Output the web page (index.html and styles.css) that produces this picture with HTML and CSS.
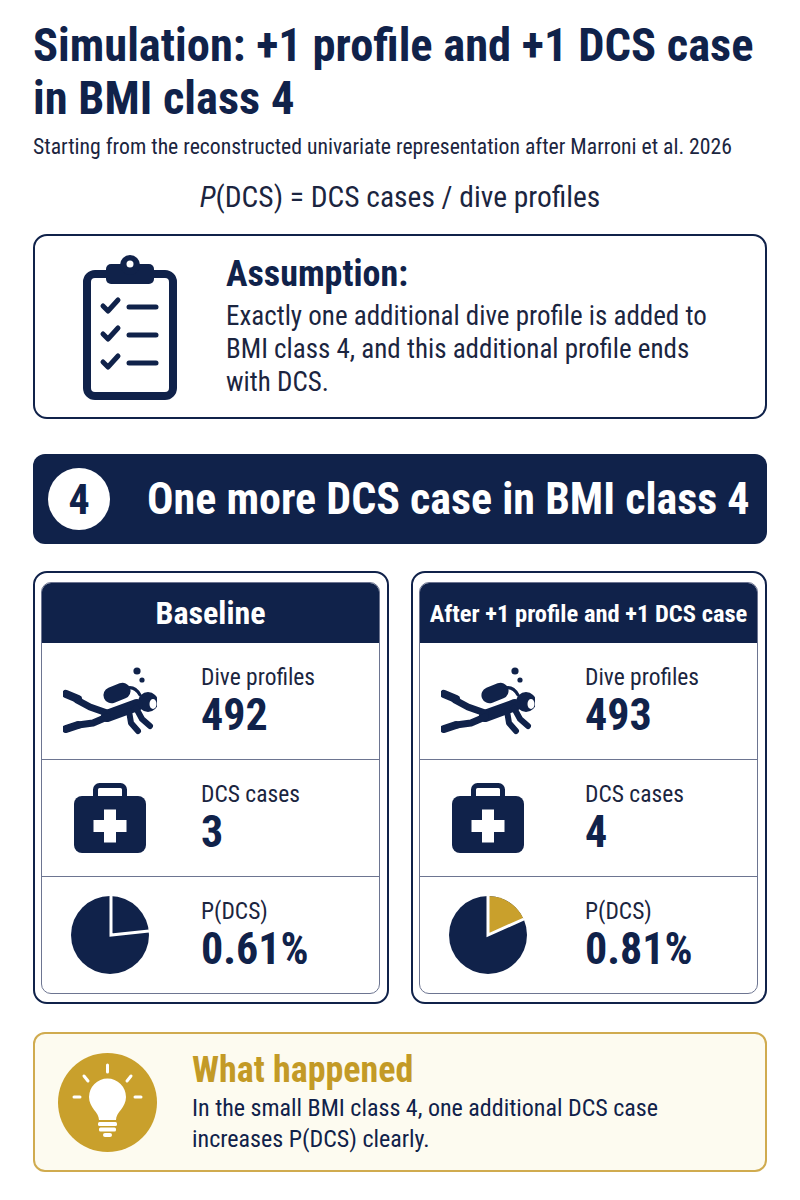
FILE: index.html
```html
<!DOCTYPE html>
<html lang="en">
<head>
<meta charset="utf-8">
<title>Simulation: +1 profile and +1 DCS case in BMI class 4</title>
<link rel="stylesheet" href="styles.css">
</head>
<body>
<div class="page">
  <h1 class="title">Simulation: +1 profile and +1 DCS case in BMI class 4</h1>
  <p class="subtitle">Starting from the reconstructed univariate representation after Marroni et al. 2026</p>
  <p class="formula"><i>P</i>(DCS) = DCS cases / dive profiles</p>

  <section class="assume">
    <svg class="clip-icon" width="94" height="146" viewBox="0 0 94 146">
      <rect x="4" y="20" width="86" height="122" rx="8" fill="#fff" stroke="#10224a" stroke-width="8"/>
      <rect x="23" y="10" width="48" height="20" rx="5" fill="#10224a"/>
      <circle cx="47" cy="11" r="10" fill="#10224a"/>
      <circle cx="47" cy="10" r="3.5" fill="#fff"/>
      <g fill="none" stroke="#10224a" stroke-width="5" stroke-linecap="round" stroke-linejoin="round">
        <path d="M20 52 l5 5 l10 -11"/>
        <path d="M46 53 H73"/>
        <path d="M20 80 l5 5 l10 -11"/>
        <path d="M46 81 H73"/>
        <path d="M20 108 l5 5 l10 -11"/>
        <path d="M46 109 H73"/>
      </g>
    </svg>
    <div class="assume-text">
      <h2>Assumption:</h2>
      <p>Exactly one additional dive profile is added to BMI class 4, and this additional profile ends with DCS.</p>
    </div>
  </section>

  <section class="banner">
    <span class="badge">4</span>
    <span class="banner-text">One more DCS case in BMI class 4</span>
  </section>

  <div class="cards">
    <div class="card">
      <div class="panel">
        <div class="panel-head">Baseline</div>
        <div class="row">
          <div class="icon-cell">
            <svg width="94" height="69" viewBox="0 0 94 69">
              <g fill="#10224a">
                <circle cx="74" cy="4" r="3.6"/>
                <circle cx="79" cy="13" r="2.6"/>
                <circle cx="85" cy="35" r="10"/>
                <rect x="40" y="18" width="28" height="16" rx="8" transform="rotate(-22 54 26)"/>
              </g>
              <ellipse cx="90" cy="37" rx="3.5" ry="5" fill="#fff"/>
              <g fill="none" stroke="#10224a" stroke-linecap="round" stroke-linejoin="round">
                <path d="M64 21 Q72 19 77 28" stroke-width="3"/>
                <path d="M74 38 L44 49" stroke-width="12"/>
                <path d="M44 46 L27 40 L14 33" stroke-width="7"/>
                <path d="M3 27 L15 32" stroke-width="8"/>
                <path d="M44 50 L30 56 L15 58" stroke-width="7"/>
                <path d="M3 62 L15 58" stroke-width="8"/>
                <path d="M73 41 L79 52 L87 59" stroke-width="6"/>
                <path d="M66 44 L68 56 L75 64" stroke-width="6"/>
              </g>
            </svg>
          </div>
          <div class="txt">
            <div class="label">Dive profiles</div>
            <div class="value">492</div>
          </div>
        </div>
        <div class="row">
          <div class="icon-cell">
            <svg width="72" height="70" viewBox="0 0 72 70">
              <rect x="21.5" y="2.5" width="29" height="20" rx="4" fill="none" stroke="#10224a" stroke-width="5"/>
              <rect x="0" y="13" width="72" height="57" rx="8" fill="#10224a"/>
              <rect x="19.5" y="37" width="33" height="12" fill="#fff"/>
              <rect x="30" y="26.5" width="12" height="33" fill="#fff"/>
            </svg>
          </div>
          <div class="txt">
            <div class="label">DCS cases</div>
            <div class="value">3</div>
          </div>
        </div>
        <div class="row">
          <div class="icon-cell">
            <svg width="80" height="80" viewBox="0 0 80 80">
              <circle cx="40" cy="40" r="39" fill="#10224a"/>
              <path d="M79 36 L41 40 L41 0" fill="none" stroke="#fff" stroke-width="3"/>
            </svg>
          </div>
          <div class="txt">
            <div class="label">P(DCS)</div>
            <div class="value">0.61%</div>
          </div>
        </div>
      </div>
    </div>

    <div class="card card-after">
      <div class="panel">
        <div class="panel-head small">After +1 profile and +1 DCS case</div>
        <div class="row">
          <div class="icon-cell">
            <svg width="94" height="69" viewBox="0 0 94 69">
              <g fill="#10224a">
                <circle cx="74" cy="4" r="3.6"/>
                <circle cx="79" cy="13" r="2.6"/>
                <circle cx="85" cy="35" r="10"/>
                <rect x="40" y="18" width="28" height="16" rx="8" transform="rotate(-22 54 26)"/>
              </g>
              <ellipse cx="90" cy="37" rx="3.5" ry="5" fill="#fff"/>
              <g fill="none" stroke="#10224a" stroke-linecap="round" stroke-linejoin="round">
                <path d="M64 21 Q72 19 77 28" stroke-width="3"/>
                <path d="M74 38 L44 49" stroke-width="12"/>
                <path d="M44 46 L27 40 L14 33" stroke-width="7"/>
                <path d="M3 27 L15 32" stroke-width="8"/>
                <path d="M44 50 L30 56 L15 58" stroke-width="7"/>
                <path d="M3 62 L15 58" stroke-width="8"/>
                <path d="M73 41 L79 52 L87 59" stroke-width="6"/>
                <path d="M66 44 L68 56 L75 64" stroke-width="6"/>
              </g>
            </svg>
          </div>
          <div class="txt">
            <div class="label">Dive profiles</div>
            <div class="value">493</div>
          </div>
        </div>
        <div class="row">
          <div class="icon-cell">
            <svg width="72" height="70" viewBox="0 0 72 70">
              <rect x="21.5" y="2.5" width="29" height="20" rx="4" fill="none" stroke="#10224a" stroke-width="5"/>
              <rect x="0" y="13" width="72" height="57" rx="8" fill="#10224a"/>
              <rect x="19.5" y="37" width="33" height="12" fill="#fff"/>
              <rect x="30" y="26.5" width="12" height="33" fill="#fff"/>
            </svg>
          </div>
          <div class="txt">
            <div class="label">DCS cases</div>
            <div class="value">4</div>
          </div>
        </div>
        <div class="row">
          <div class="icon-cell">
            <svg width="80" height="80" viewBox="0 0 80 80">
              <circle cx="40" cy="40" r="39" fill="#10224a"/>
              <path d="M40 40 L40 1 A39 39 0 0 1 75.6 24.1 Z" fill="#c9a02c"/>
              <path d="M76 24 L40 40 L40 0" fill="none" stroke="#fff" stroke-width="3"/>
            </svg>
          </div>
          <div class="txt">
            <div class="label">P(DCS)</div>
            <div class="value">0.81%</div>
          </div>
        </div>
      </div>
    </div>
  </div>

  <section class="note">
    <svg class="bulb" width="99" height="99" viewBox="0 0 99 99">
      <circle cx="49.5" cy="49.5" r="49.5" fill="#c9a02c"/>
      <g stroke="#fff" stroke-width="3" stroke-linecap="round" fill="none">
        <path d="M49.5 12 V19"/>
        <path d="M26 23 L30 28"/>
        <path d="M73 23 L69 28"/>
        <path d="M16 44 H22"/>
        <path d="M77 44 H83"/>
      </g>
      <g fill="#fff">
        <path d="M41 67 C41 59 31 55 31 44 A18.5 18.5 0 1 1 68 44 C68 55 58 59 58 67 Z"/>
        <rect x="40" y="69" width="19" height="4" rx="1.5"/>
        <rect x="41" y="74.5" width="17" height="4" rx="1.5"/>
        <rect x="45" y="80" width="9" height="4" rx="2"/>
      </g>
    </svg>
    <div class="note-text">
      <h3>What happened</h3>
      <p>In the small BMI class 4, one additional DCS case increases P(DCS) clearly.</p>
    </div>
  </section>
</div>
</body>
</html>
```

FILE: styles.css
```css
* { box-sizing: border-box; }

body {
  margin: 0;
  background: #ffffff;
  color: #10224a;
  font-family: "Roboto Condensed", "Open Sans Condensed", "Liberation Sans Narrow", "Roboto", sans-serif;
  font-stretch: condensed;
}

.page {
  padding: 19px 33px 0 33px;
}

.title {
  margin: 0;
  max-width: 725px;
  font-size: 46.5px;
  line-height: 53px;
  font-weight: 700;
  color: #10224a;
}

.subtitle {
  margin: 9px 0 0;
  font-size: 21.7px;
  line-height: 26px;
  color: #1b2540;
}

.formula {
  margin: 20px 0 0;
  text-align: center;
  font-size: 29.5px;
  line-height: 34px;
  color: #1b2540;
}

.assume {
  margin-top: 20px;
  height: 185px;
  border: 2px solid #10224a;
  border-radius: 14px;
  display: flex;
  align-items: center;
  padding-left: 48px;
  gap: 49px;
}

.clip-icon { flex: none; }

.assume-text h2 {
  margin: 0 0 6px;
  font-size: 36px;
  line-height: 40px;
  font-weight: 700;
}

.assume-text p {
  margin: 0;
  max-width: 500px;
  font-size: 27px;
  line-height: 33px;
  color: #1b2540;
}

.banner {
  margin-top: 35px;
  height: 90px;
  background: #10224a;
  border-radius: 12px;
  display: flex;
  align-items: center;
  padding-left: 15px;
  gap: 37px;
}

.badge {
  width: 62px;
  height: 62px;
  flex: none;
  border-radius: 50%;
  background: #ffffff;
  color: #10224a;
  display: flex;
  align-items: center;
  justify-content: center;
  font-size: 42px;
  font-weight: 700;
}

.banner-text {
  color: #ffffff;
  font-size: 44px;
  font-weight: 700;
  white-space: nowrap;
}

.cards {
  margin-top: 27px;
  display: grid;
  grid-template-columns: minmax(0, 1fr) minmax(0, 1fr);
  gap: 22px;
}

.card {
  height: 433px;
  border: 2.5px solid #10224a;
  border-radius: 14px;
  padding: 9px 7px 8px 6px;
}

.panel {
  height: 100%;
  border: 1px solid #6d7591;
  border-radius: 10px;
  overflow: hidden;
  display: flex;
  flex-direction: column;
}

.panel-head {
  height: 60px;
  flex: none;
  background: #10224a;
  color: #ffffff;
  display: flex;
  align-items: center;
  justify-content: center;
  font-size: 32px;
  font-weight: 700;
  white-space: nowrap;
}

.panel-head.small { font-size: 24.5px; }

.row {
  flex: 1;
  display: flex;
  align-items: center;
  border-top: 1px solid #6d7591;
}

.panel-head + .row { border-top: none; }

.icon-cell {
  width: 136px;
  flex: none;
  display: flex;
  justify-content: center;
}

.txt { margin-left: 23px; }

.card-after .txt { margin-left: 29px; }

.label {
  font-size: 23.5px;
  line-height: 27px;
  color: #1b2540;
}

.value {
  font-size: 44px;
  line-height: 48px;
  font-weight: 700;
  color: #10224a;
}

.note {
  margin-top: 28px;
  height: 140px;
  background: #fdfbf0;
  border: 2px solid #d0ab4f;
  border-radius: 12px;
  display: flex;
  align-items: center;
  padding-left: 23px;
  gap: 35px;
}

.bulb { flex: none; }

.note-text h3 {
  margin: 0 0 3px;
  font-size: 36px;
  line-height: 40px;
  font-weight: 700;
  color: #c39a26;
}

.note-text p {
  margin: 0;
  max-width: 520px;
  font-size: 24px;
  line-height: 31px;
  color: #10224a;
}
```
